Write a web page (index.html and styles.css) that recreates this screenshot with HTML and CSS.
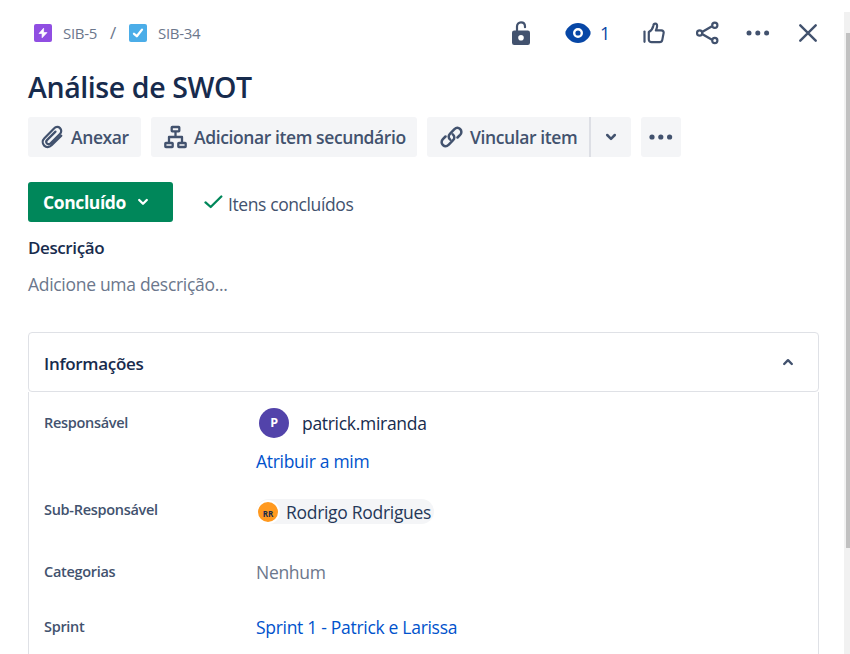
FILE: index.html
```html
<!DOCTYPE html>
<html lang="pt-BR">
<head>
<meta charset="utf-8">
<title>Análise de SWOT</title>
<link rel="stylesheet" href="styles.css">
</head>
<body>
<div class="dialog">
<main class="issue">
  <header class="topbar">
    <nav class="crumbs">
      <svg width="18" height="18" viewBox="0 0 18 18"><rect width="18" height="18" rx="2" fill="#904ee2"/><path d="M9.6 4.2 5 9.5h3.1v4.3L13 8.6H9.6z" fill="#fff" stroke="#fff" stroke-width=".7" stroke-linejoin="round"/></svg>
      <span class="crumb crumb-epic">SIB-5</span>
      <span class="slash">/</span>
      <svg width="18" height="18" viewBox="0 0 18 18"><rect width="18" height="18" rx="2" fill="#4bade8"/><path d="M5 9.8 7.8 12.2 13 5.6" fill="none" stroke="#fff" stroke-width="2.3" stroke-linecap="round" stroke-linejoin="round"/></svg>
      <span class="crumb crumb-task">SIB-34</span>
    </nav>
    <div class="actions">
      <svg class="lock" width="18" height="25" viewBox="0 0 18 25"><path d="M5 10V5.6C5 3 6.700 1.300 9 1.300s4 1.700 4 4.300v.6" fill="none" stroke="#42526e" stroke-width="2.200" stroke-linecap="round"/><path fill-rule="evenodd" d="M2.200 9.500h13.600A2.200 2.200 0 0 1 18 11.700v10.100a2.200 2.200 0 0 1-2.200 2.200H2.200A2.200 2.200 0 0 1 0 21.800V11.700a2.200 2.200 0 0 1 2.200-2.200zM9 14a2.800 2.800 0 1 0 0 5.600A2.800 2.800 0 0 0 9 14z" fill="#42526e"/></svg>
      <svg class="eye" width="26" height="22" viewBox="0 0 26 22"><path d="M13 1C6.500 1 2.600 5.400.7 9.300q-.7 1.700 0 3.400C2.600 16.600 6.500 21 13 21s10.400-4.400 12.300-8.300q.7-1.700 0-3.400C23.400 5.400 19.500 1 13 1z" fill="#0747a6"/><circle cx="13" cy="11" r="3.800" fill="#0747a6" stroke="#fff" stroke-width="2.400"/></svg>
      <span class="count">1</span>
      <svg class="thumb-icon" width="22" height="22" viewBox="0 0 22 22" fill="none" stroke="#42526e" stroke-width="2.200" stroke-linejoin="round" stroke-linecap="round"><path d="M1.500 9.500v10.300"/><path d="M5.800 10c2.700-1.500 4.100-3.500 4.600-6.500.3-2.600 3.700-2.600 3.700.4 0 1.700-.5 3-1.200 4.500h5.400c1.800 0 2.600 1.300 2.300 2.700l-1.300 6.800c-.3 1.500-1.300 2.300-2.700 2.300H8.500c-1.500 0-2.700-1-2.700-2.600z"/></svg>
      <svg class="share" width="23" height="24" viewBox="0 0 23 24" fill="none" stroke="#42526e"><path d="M6.500 10.700 16 5.200M6.500 13.300l9.500 5.500" stroke-width="2.400"/><g stroke-width="2.200"><circle cx="3.600" cy="12" r="2.600"/><circle cx="18.800" cy="4.300" r="2.600"/><circle cx="18.800" cy="19.500" r="2.600"/></g></svg>
      <svg class="more" width="24" height="6" viewBox="0 0 24 6" fill="#42526e"><circle cx="3" cy="3" r="2.500"/><circle cx="11.800" cy="3" r="2.500"/><circle cx="20.600" cy="3" r="2.500"/></svg>
      <svg class="close" width="18" height="18" viewBox="0 0 18 18"><path d="M1.300 1.300 16.700 16.700M16.700 1.300 1.300 16.700" stroke="#42526e" stroke-width="2.400" stroke-linecap="round"/></svg>
    </div>
  </header>

  <h1 class="title"><span>Análise de SWOT</span></h1>

  <div class="toolbar">
    <button class="btn btn-attach"><svg width="23" height="24" viewBox="0 0 23 24" fill="none" stroke="#42526e" stroke-width="2.200" stroke-linecap="round"><path d="M20.300 10.700 10.600 20.300c-2.500 2.400-5.500 2.200-7.400.3-2-2-2-5.100.2-7.300L13 3.400c1.900-1.900 4.400-1.900 6-.3s1.700 4.100-.1 5.900l-9.300 9.200c-1.300 1.300-2.700 1.200-3.700.3-.9-1-.9-2.400.3-3.600l8.300-8.300"/></svg><span class="t-attach">Anexar</span></button>
    <button class="btn btn-child"><svg width="23" height="24" viewBox="0 0 23 24" fill="none" stroke="#42526e" stroke-width="2.300" stroke-linejoin="round"><rect x="7.700" y="2" width="7.600" height="4.300" rx=".6"/><path d="M11.500 6.500V12M5 17.500V12h13v5.500"/><rect x="1.300" y="18" width="7.400" height="4" rx=".6"/><rect x="14.300" y="18" width="7.400" height="4" rx=".6"/></svg><span class="t-child">Adicionar item secundário</span></button>
    <div class="split">
      <button class="btn btn-link"><svg width="23" height="22" viewBox="0 0 23 22" fill="none" stroke="#42526e" stroke-width="2.500" stroke-linecap="round"><path d="M10.200 13.600c-2-1.700-1.900-4.200-.3-5.800l4.300-4.400c1.900-1.900 4.300-1.900 5.900-.4 1.700 1.600 1.700 4.100 0 5.900l-2.600 2.600"/><path d="M12.800 8.400c2 1.700 1.900 4.200.3 5.800l-4.300 4.400c-1.900 1.900-4.300 1.900-5.900.4-1.700-1.600-1.700-4.100 0-5.900l2.600-2.600"/></svg><span class="t-link">Vincular item</span></button>
      <button class="btn btn-drop"><svg width="12" height="8" viewBox="0 0 12 8"><path d="M2.200 2 6 5.800 9.800 2" fill="none" stroke="#42526e" stroke-width="2.500" stroke-linecap="round" stroke-linejoin="round"/></svg></button>
    </div>
    <button class="btn btn-more"><svg width="24" height="6" viewBox="0 0 24 6" fill="#42526e"><circle cx="3" cy="3" r="2.600"/><circle cx="11.800" cy="3" r="2.600"/><circle cx="20.600" cy="3" r="2.600"/></svg></button>
  </div>

  <div class="status-row">
    <button class="status"><span>Concluído</span><svg width="12" height="8" viewBox="0 0 12 8"><path d="M2.200 2 6 5.800 9.800 2" fill="none" stroke="#fff" stroke-width="2.300" stroke-linecap="round" stroke-linejoin="round"/></svg></button>
    <svg class="check" width="19" height="14" viewBox="0 0 19 14"><path d="M1.500 7.400 6.700 12 17.300 1.500" fill="none" stroke="#00875a" stroke-width="2.300" stroke-linecap="round" stroke-linejoin="round"/></svg>
    <span class="resolution">Itens concluídos</span>
  </div>

  <h2 class="desc-title"><span>Descrição</span></h2>
  <p class="desc"><span>Adicione uma descrição...</span></p>

  <section class="panel">
    <div class="panel-head">
      <h2><span>Informações</span></h2>
      <svg width="12" height="8" viewBox="0 0 12 8"><path d="M2.200 6 6 2.200 9.800 6" fill="none" stroke="#42526e" stroke-width="2.400" stroke-linecap="round" stroke-linejoin="round"/></svg>
    </div>
    <div class="panel-body">
      <div class="row row-user"><span class="label l1">Responsável</span><div class="value"><span class="avatar">P</span><span class="user">patrick.miranda</span></div></div>
      <div class="row row-assign"><span class="label"></span><div class="value"><a class="assign">Atribuir a mim</a></div></div>
      <div class="row row-sub"><span class="label l2">Sub-Responsável</span><div class="value"><span class="pill"><span class="mini">RR</span><span class="name">Rodrigo Rodrigues</span></span></div></div>
      <div class="row row-cat"><span class="label l3">Categorias</span><div class="value"><span class="none">Nenhum</span></div></div>
      <div class="row row-sprint"><span class="label l4">Sprint</span><div class="value"><a class="sprint">Sprint 1 - Patrick e Larissa</a></div></div>
    </div>
  </section>
</main>
<div class="scroll"><div class="scroll-thumb"></div></div>
</div>
</body>
</html>
```
FILE: styles.css
```css
* { box-sizing: border-box; }
body { margin: 0; background: #fff; color: #172b4d; font: 17.5px/24px "Open Sans", "Noto Sans", sans-serif; overflow: hidden; }
svg { display: block; flex: none; }
h1, h2, p { margin: 0; }
span, a { white-space: nowrap; }
button { border: 0; margin: 0; font: inherit; }
.dialog { display: flex; justify-content: space-between; height: 654px; overflow: hidden; }
.issue { width: 791px; margin-left: 28px; padding-top: 13px; }
.topbar { display: flex; justify-content: space-between; height: 40px; }
.crumbs { display: flex; align-items: center; padding-left: 6px; color: #6b778c; font-size: 15px; }
.crumb-epic { margin-left: 11px; width: 47px; letter-spacing: -.3px; }
.slash { width: 19px; font-size: 17px; }
.crumb-task { margin-left: 11px; letter-spacing: -.3px; }
.actions { display: flex; align-items: center; padding-right: 2px; }
.eye { margin-left: 35px; }
.count { color: #0747a6; margin-left: 9px; width: 12px; font-size: 18px; }
.thumb-icon { margin-left: 31px; }
.share { margin-left: 31px; }
.more { margin-left: 27px; }
.close { margin-left: 29px; }
.title { margin-top: 14px; height: 40px; font-size: 28.500px; line-height: 40px; font-weight: 600; letter-spacing: -.4px; }
.toolbar { display: flex; gap: 10px; margin-top: 10px; height: 40px; }
.btn { display: flex; align-items: center; height: 40px; padding: 0; background: #f4f5f7; color: #42526e; border-radius: 3px; font-weight: 600; }
.btn-attach { width: 113px; padding-left: 13px; gap: 7px; }
.btn-child { width: 266px; padding-left: 13px; gap: 7px; }
.split { display: flex; }
.btn-link { width: 162px; padding-left: 13px; gap: 7px; border-radius: 3px 0 0 3px; }
.btn-drop { width: 42px; justify-content: center; border-left: 2px solid #dddfe5; border-radius: 0 3px 3px 0; }
.btn-more { width: 40px; justify-content: center; }
.btn span { letter-spacing: -.4px; }
.status-row { display: flex; align-items: center; margin-top: 25px; height: 40px; }
.status { display: flex; align-items: center; width: 145px; height: 40px; padding: 0 24px 0 15px; justify-content: space-between; background: #00875a; border-radius: 3px; color: #fff; font-weight: 700; letter-spacing: -.4px; }
.check { margin-left: 31px; }
.resolution { margin: 3px 0 0 5px; color: #42526e; letter-spacing: -.4px; }
.desc-title { margin-top: 14px; height: 24px; font-size: 17px; line-height: 24px; font-weight: 600; letter-spacing: -.4px; }
.desc { margin-top: 12px; height: 24px; color: #6b778c; letter-spacing: -.3px; }
.panel { margin-top: 36px; }
.panel-head { display: flex; align-items: center; justify-content: space-between; height: 60px; padding: 3px 24px 0 15px; border: 1px solid #dfe1e6; border-radius: 4px; }
.panel-head h2 { font-size: 17px; font-weight: 600; letter-spacing: -.3px; }
.panel-head svg { margin-top: -4px; }
.panel-body { height: 270px; padding-top: 12px; border: solid #dfe1e6; border-width: 0 1px; }
.row { display: flex; align-items: center; padding-left: 15px; }
.label { width: 212px; flex: none; color: #42526e; font-size: 14.500px; font-weight: 600; letter-spacing: -.3px; }
.value { display: flex; align-items: center; letter-spacing: -.3px; }
.row-user { height: 38px; }
.avatar { display: grid; place-items: center; width: 30px; height: 30px; margin: 0 13px 0 3px; border-radius: 50%; background: #5243aa; color: #fff; font-size: 12.500px; font-weight: 700; }
.assign, .sprint { color: #0052cc; }
.row-assign { height: 37px; }
.row-sub { height: 62px; }
.pill { display: flex; align-items: center; height: 25px; width: 178px; margin-top: 3px; background: #f4f5f7; border-radius: 13px; color: #253858; }
.mini { display: grid; place-items: center; width: 24px; height: 24px; border: 2px solid #fff; border-radius: 50%; background: #ff991f; color: #172b4d; font-size: 8px; font-weight: 700; letter-spacing: 0; margin-right: 6px; }
.row-cat { height: 62px; }
.row-sprint { height: 48px; }
.none { color: #6b778c; }
.scroll { width: 6px; height: 642px; margin-top: 12px; padding: 21px 0 0 2px; background: #f1f1f1; }
.scroll-thumb { height: 515px; background: #c1c1c1; }
```
